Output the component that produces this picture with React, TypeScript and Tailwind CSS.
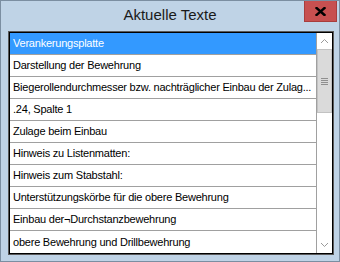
import React from 'react'

const rows = [
  'Verankerungsplatte',
  'Darstellung der Bewehrung',
  'Biegerollendurchmesser bzw. nachträglicher Einbau der Zulag...',
  '.24, Spalte 1',
  'Zulage beim Einbau',
  'Hinweis zu Listenmatten:',
  'Hinweis zum Stabstahl:',
  'Unterstützungskörbe für die obere Bewehrung',
  'Einbau der\u00acDurchstanzbewehrung',
  'obere Bewehrung und Drillbewehrung',
]

export default function App() {
  return (
    <div className="w-[340px] h-[262px] bg-[#bfd3e6] border border-[#7b8ea1] relative flex flex-col overflow-hidden">
      {/* Title bar */}
      <div className="h-[30px] flex items-center justify-center text-[15px] text-[#1a1a1a] pb-[1px]" style={{ fontFamily: '"Liberation Sans", Arial, sans-serif' }}>
        Aktuelle Texte
      </div>
      <div className="absolute top-0 right-[2px] w-[33px] h-[21px] bg-[#c75050] border border-[#a83d3d] border-t-0 flex items-center justify-center">
        <svg width="11" height="9" viewBox="0 0 11 9">
          <path d="M1.5 1 L9.5 8 M9.5 1 L1.5 8" stroke="#000" strokeWidth="2.4" strokeLinecap="square" />
        </svg>
      </div>

      {/* List box */}
      <div className="ml-[7px] w-[326px] h-[224px] border border-[#5a5a5a] bg-white">
        <div className="w-full h-full border border-[#000] flex">
          <div className="w-[307px] flex flex-col border-r border-[#a0a0a0]">
            {rows.map((r, i) => (
              <div
                key={i}
                className={
                  'h-[22px] shrink-0 border-b border-[#a0a0a0] pl-[3px] flex items-center text-[11px] tracking-[-0.22px] whitespace-nowrap overflow-hidden ' +
                  (i === 0 ? 'bg-[#3399ff] text-white' : 'text-black') +
                  (i === rows.length - 1 ? ' border-b-0' : '')
                }
                style={{ fontFamily: '"Liberation Sans", Arial, sans-serif' }}
              >
                {r}
              </div>
            ))}
          </div>
          {/* Scrollbar */}
          <div className="flex-1 flex flex-col bg-white">
            <div className="h-[16px] flex items-center justify-center">
              <svg width="9" height="6" viewBox="0 0 9 6">
                <path d="M1 5 L4.5 1.5 L8 5" fill="none" stroke="#9a9a9a" strokeWidth="1" />
              </svg>
            </div>
            <div className="h-[64px] bg-[#dadada] border border-[#c2c2c2] flex flex-col items-center justify-center gap-[1px]">
              <div className="w-[7px] h-[1px] bg-[#8f8f8f]" />
              <div className="w-[7px] h-[1px] bg-[#8f8f8f]" />
              <div className="w-[7px] h-[1px] bg-[#8f8f8f]" />
              <div className="w-[7px] h-[1px] bg-[#8f8f8f]" />
            </div>
            <div className="flex-1" />
            <div className="h-[16px] flex items-center justify-center">
              <svg width="9" height="6" viewBox="0 0 9 6">
                <path d="M1 1 L4.5 4.5 L8 1" fill="none" stroke="#9a9a9a" strokeWidth="1" />
              </svg>
            </div>
          </div>
        </div>
      </div>
    </div>
  )
}
